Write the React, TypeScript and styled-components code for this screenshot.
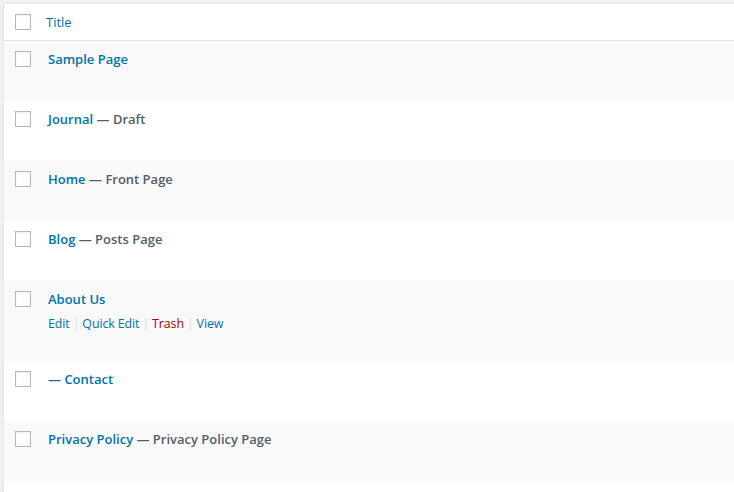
import React from 'react';
import styled, { createGlobalStyle } from 'styled-components';

const GlobalStyle = createGlobalStyle`
  html, body {
    margin: 0;
    padding: 0;
    background: #f1f1f1;
    font-family: 'Open Sans', 'Noto Sans', sans-serif;
    font-size: 13px;
    color: #555d66;
    overflow: hidden;
  }
`;

type Page = {
  title: string;
  state?: string;
  actions?: boolean;
};

const pages: Page[] = [
  { title: 'Sample Page' },
  { title: 'Journal', state: 'Draft' },
  { title: 'Home', state: 'Front Page' },
  { title: 'Blog', state: 'Posts Page' },
  { title: 'About Us', actions: true },
  { title: '— Contact' },
  { title: 'Privacy Policy', state: 'Privacy Policy Page' },
];

export default function App() {
  return (
    <>
      <GlobalStyle />
      <Wrapper>
        <Table>
          <HeaderRow>
            <CheckCell>
              <Checkbox />
            </CheckCell>
            <HeaderTitle>Title</HeaderTitle>
          </HeaderRow>
          {pages.map((page, i) => (
            <Row key={page.title} alt={i % 2 === 0}>
              <CheckCell>
                <Checkbox />
              </CheckCell>
              <TitleCell>
                <TitleLine>
                  <TitleLink>{page.title}</TitleLink>
                  {page.state && <State> — {page.state}</State>}
                </TitleLine>
                {page.actions && (
                  <Actions>
                    <Action>Edit</Action>
                    <Sep>|</Sep>
                    <Action>Quick Edit</Action>
                    <Sep>|</Sep>
                    <Action danger>Trash</Action>
                    <Sep>|</Sep>
                    <Action>View</Action>
                  </Actions>
                )}
              </TitleCell>
            </Row>
          ))}
        </Table>
      </Wrapper>
    </>
  );
}

const Wrapper = styled.div`
  padding: 3px 0 0 3px;
  height: 492px;
  box-sizing: border-box;
`;

const Table = styled.div`
  background: #fff;
  border: 1px solid #e5e5e5;
  border-right: none;
  box-shadow: 0 1px 1px rgba(0, 0, 0, 0.04);
  height: 100%;
`;

const HeaderRow = styled.div`
  display: flex;
  align-items: center;
  height: 36px;
  border-bottom: 1px solid #e1e1e1;
`;

const CheckCell = styled.div`
  width: 43px;
  padding-left: 11px;
  box-sizing: border-box;
  flex-shrink: 0;
`;

const Checkbox = styled.span`
  display: block;
  width: 16px;
  height: 16px;
  box-sizing: border-box;
  border: 1px solid #b4b9be;
  background: #fff;
  box-shadow: inset 0 1px 2px rgba(0, 0, 0, 0.07);
`;

const HeaderTitle = styled.span`
  color: #0073aa;
  font-size: 13px;
  line-height: 20px;
  margin-left: -1px;
`;

const Row = styled.div<{ alt: boolean }>`
  display: flex;
  align-items: flex-start;
  min-height: 60px;
  box-sizing: border-box;
  padding-top: 10px;
  background: ${(p) => (p.alt ? '#f9f9f9' : '#fff')};
`;

const TitleCell = styled.div`
  padding-left: 1px;
`;

const TitleLine = styled.div`
  line-height: 16px;
  height: 16px;
`;

const TitleLink = styled.span`
  color: #0073aa;
  font-weight: 600;
`;

const State = styled.span`
  color: #555d66;
  font-weight: 600;
`;

const Actions = styled.div`
  margin-top: 9px;
  margin-bottom: 29px;
  line-height: 16px;
  font-size: 12.4px;
  letter-spacing: -0.1px;
`;

const Action = styled.span<{ danger?: boolean }>`
  color: ${(p) => (p.danger ? '#a00' : '#0073aa')};
`;

const Sep = styled.span`
  color: #ddd;
  margin: 0 3px;
`;
